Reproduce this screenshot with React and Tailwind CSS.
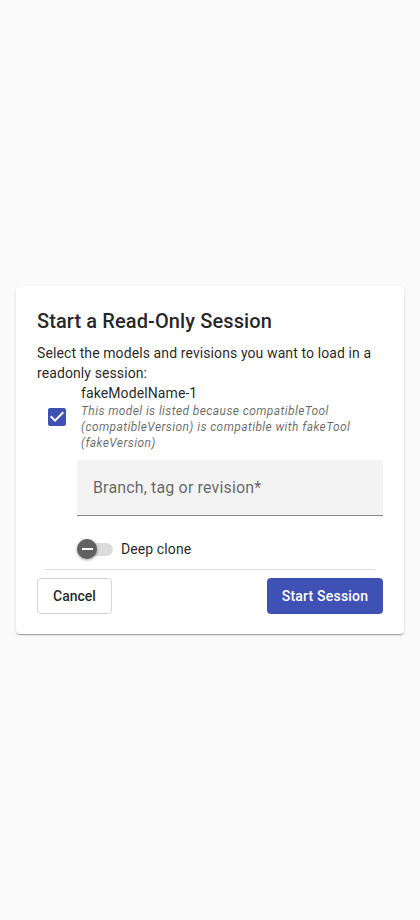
export default function App() {
  return (
    <div className="min-h-[920px] w-full bg-[#fafafa] flex items-start justify-center pt-[286px]" style={{ fontFamily: "Roboto, 'Liberation Sans', sans-serif" }}>
      <div className="w-[388px] bg-white rounded-[4px] shadow-[0_2px_1px_-1px_rgba(0,0,0,0.2),0_1px_1px_0_rgba(0,0,0,0.14),0_1px_3px_0_rgba(0,0,0,0.12)] px-[21px] pt-[19px] pb-[20px]">
        <h2 className="text-[20px] leading-[32px] font-medium text-[rgba(0,0,0,0.87)] tracking-[0.1px]">Start a Read-Only Session</h2>
        <p className="mt-[6px] text-[14px] leading-[20px] text-[rgba(0,0,0,0.87)] tracking-[0.1px]">Select the models and revisions you want to load in a readonly session:</p>
        <div className="flex items-center">
          <div className="w-[44px] shrink-0 flex justify-start pl-[8px]">
            <svg width="24" height="24" viewBox="0 0 24 24">
              <path fill="#3f51b5" d="M19 3H5c-1.11 0-2 .9-2 2v14c0 1.1.89 2 2 2h14c1.11 0 2-.9 2-2V5c0-1.1-.89-2-2-2zm-9 14l-5-5 1.41-1.41L10 14.17l7.59-7.59L19 8l-9 9z" />
            </svg>
          </div>
          <div className="flex flex-col">
            <span className="text-[14px] leading-[20px] text-[rgba(0,0,0,0.87)] tracking-[0.1px]">fakeModelName-1</span>
            <span className="text-[12px] leading-[16px] italic text-[rgba(0,0,0,0.6)] tracking-[0.4px]">This model is listed because compatibleTool (compatibleVersion) is compatible with fakeTool (fakeVersion)</span>
          </div>
        </div>
        <div className="ml-[40px] mt-[9px] h-[56px] bg-[#f3f3f3] rounded-t-[4px] border-b border-[#8a8a8a] flex items-center px-[16px]">
          <span className="text-[16px] text-[rgba(0,0,0,0.6)] tracking-[0.15px]">Branch, tag or revision*</span>
        </div>
        <div className="ml-[40px] mt-[23px] flex items-center h-[20px]">
          <div className="relative w-[36px] h-[20px] flex items-center">
            <div className="absolute left-[3px] w-[33px] h-[13px] rounded-full bg-[#dcdcdc]"></div>
            <div className="absolute left-0 w-[20px] h-[20px] rounded-full bg-[#616161] shadow-[0_1px_3px_rgba(0,0,0,0.4)] flex items-center justify-center">
              <div className="w-[11px] h-[2px] bg-white"></div>
            </div>
          </div>
          <span className="ml-[8px] text-[14px] text-[rgba(0,0,0,0.87)] tracking-[0.1px]">Deep clone</span>
        </div>
        <div className="mx-[8px] mt-[10px] border-t border-[#e0e0e0]"></div>
        <div className="mt-[8px] flex justify-between">
          <button className="h-[36px] w-[75px] border border-[#d6d6d6] rounded-[4px] text-[14px] font-medium text-[rgba(0,0,0,0.87)] bg-white">Cancel</button>
          <button className="h-[36px] w-[116px] rounded-[4px] bg-[#3f51b5] text-[14px] font-medium text-white tracking-[0.2px]">Start Session</button>
        </div>
      </div>
    </div>
  );
}
